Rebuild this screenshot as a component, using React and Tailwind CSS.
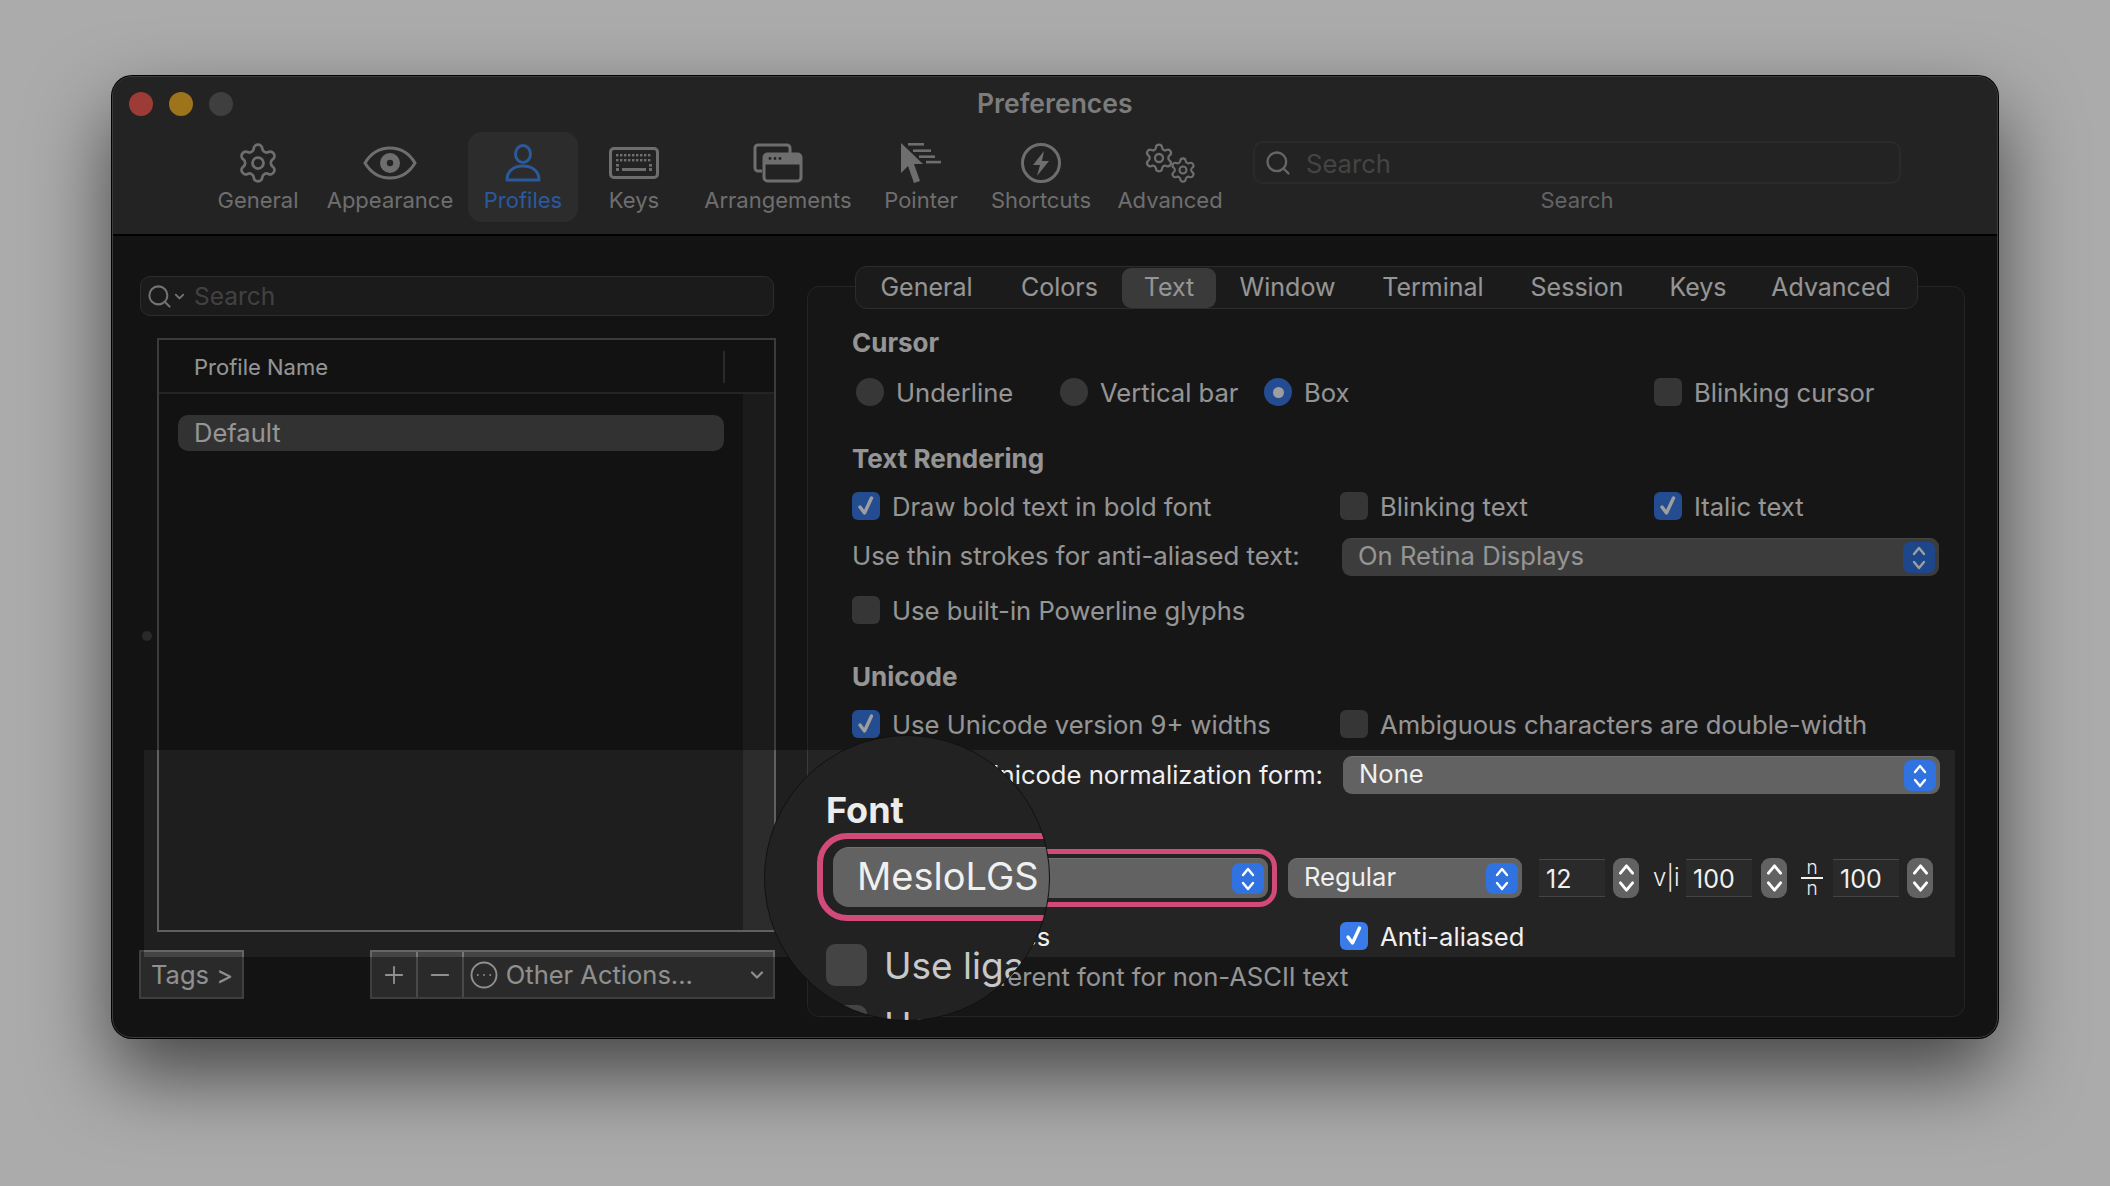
import React from "react";
import { Settings, Search, ChevronDown, Plus, Minus, CircleEllipsis } from "lucide-react";

const toolbarItems = [
  { label: "General", w: "w-[108px]", icon: <Settings size={44} strokeWidth={1.5} /> },
  { label: "Appearance", w: "w-[156px]", icon: <EyeIcon /> },
  { label: "Profiles", w: "w-[110px]", icon: <ProfileIcon />, active: true },
  { label: "Keys", w: "w-[112px]", icon: <KeyboardIcon /> },
  { label: "Arrangements", w: "w-[176px]", icon: <ArrangeIcon /> },
  { label: "Pointer", w: "w-[110px]", icon: <PointerIcon /> },
  { label: "Shortcuts", w: "w-[130px]", icon: <BoltIcon /> },
  { label: "Advanced", w: "w-[128px]", icon: <GearsIcon /> },
];

const tabs = [
  { label: "General", w: "w-[141px]" },
  { label: "Colors", w: "w-[125px]" },
  { label: "Text", w: "w-[94px]", active: true },
  { label: "Window", w: "w-[143px]" },
  { label: "Terminal", w: "w-[148px]" },
  { label: "Session", w: "w-[140px]" },
  { label: "Keys", w: "w-[102px]" },
  { label: "Advanced", w: "w-[164px]" },
];

function EyeIcon() {
  return (
    <svg width="54" height="34" viewBox="0 0 54 34" fill="none" stroke="currentColor" strokeWidth="3">
      <path d="M2 17C8 7 17 2 27 2s19 5 25 15c-6 10-15 15-25 15S8 27 2 17Z" />
      <circle cx="27" cy="17" r="10" fill="currentColor" stroke="none" />
      <circle cx="27" cy="17" r="3.2" fill="#393939" stroke="none" />
    </svg>
  );
}

function ProfileIcon() {
  return (
    <svg width="36" height="38" viewBox="0 0 36 38" fill="none" stroke="currentColor" strokeWidth="3">
      <ellipse cx="18" cy="10" rx="7.5" ry="8.5" />
      <path d="M2 36c0-9 7-14 16-14s16 5 16 14Z" strokeLinejoin="round" />
    </svg>
  );
}

function KeyboardIcon() {
  const dots = [];
  for (let i = 0; i < 9; i++) {
    dots.push(<rect key={"a" + i} x={7 + i * 4} y="7" width="2.4" height="2.4" />);
    dots.push(<rect key={"b" + i} x={7 + i * 4} y="12" width="2.4" height="2.4" />);
  }
  return (
    <svg width="50" height="32" viewBox="0 0 50 32" fill="currentColor">
      <rect x="1.5" y="1.5" width="47" height="29" rx="3.5" fill="none" stroke="currentColor" strokeWidth="3" />
      {dots}
      <rect x="7" y="17" width="3" height="2.6" />
      <rect x="40" y="17" width="3" height="2.6" />
      <rect x="13" y="21" width="24" height="3" />
      <rect x="7" y="21" width="3" height="3" />
      <rect x="40" y="21" width="3" height="3" />
    </svg>
  );
}

function ArrangeIcon() {
  return (
    <svg width="50" height="40" viewBox="0 0 50 40" fill="none" stroke="currentColor" strokeWidth="3">
      <path d="M9 28H5a3 3 0 0 1-3-3V5a3 3 0 0 1 3-3h29a3 3 0 0 1 3 3v6" />
      <rect x="11" y="11" width="37" height="27" rx="3.5" />
      <path d="M11 20h37" />
      <path d="M11 15a4 4 0 0 1 4-4h29a4 4 0 0 1 4 4v5H11Z" fill="currentColor" stroke="none" />
      <circle cx="17" cy="15.5" r="1.4" fill="#393939" stroke="none" />
      <circle cx="22" cy="15.5" r="1.4" fill="#393939" stroke="none" />
      <circle cx="27" cy="15.5" r="1.4" fill="#393939" stroke="none" />
    </svg>
  );
}

function PointerIcon() {
  return (
    <svg width="40" height="40" viewBox="0 0 40 40" fill="currentColor">
      <path d="M0 0v30l7-7 6 17 6-2-6-17h9Z" />
      <rect x="7" y="0" width="16" height="2.6" />
      <rect x="12" y="6.4" width="18" height="2.6" />
      <rect x="18" y="12.4" width="16" height="2.6" />
      <rect x="25" y="17.8" width="15" height="2.6" />
    </svg>
  );
}

function BoltIcon() {
  return (
    <svg width="40" height="40" viewBox="0 0 40 40" fill="none" stroke="currentColor" strokeWidth="3">
      <circle cx="20" cy="20" r="18.5" />
      <path d="M23 8 12 22h7l-3 11 12-15h-7Z" fill="currentColor" stroke="none" />
    </svg>
  );
}

function GearsIcon() {
  return (
    <div className="relative w-[54px] h-[42px]">
      <Settings size={32} strokeWidth={1.7} className="absolute left-0 top-0" />
      <Settings size={28} strokeWidth={1.8} className="absolute right-0 bottom-0" />
    </div>
  );
}

function UpDown({ size = 14 }) {
  return (
    <svg width={size} height={size * 2} viewBox="0 0 14 28" fill="none" stroke="#fff" strokeWidth="2.4" strokeLinecap="round" strokeLinejoin="round">
      <path d="M2 10 7 4l5 6" />
      <path d="M2 18l5 6 5-6" />
    </svg>
  );
}

function Check({ checked, label, className = "" }) {
  return (
    <div className={"flex items-center h-[30px] " + className}>
      <div className={"w-[28px] h-[28px] rounded-[6px] flex items-center justify-center shrink-0 " + (checked ? "bg-[#3a7bea]" : "bg-[#585858]")}>
        {checked && (
          <svg width="20" height="22" viewBox="0 0 20 22" fill="none" stroke="#fff" strokeWidth="3.4" strokeLinecap="round" strokeLinejoin="round">
            <path d="M4 12l4.5 6L15.5 3" />
          </svg>
        )}
      </div>
      <span className="ml-[12px] mt-[3px] whitespace-nowrap">{label}</span>
    </div>
  );
}

function Radio({ on, label, className = "" }) {
  return (
    <div className={"flex items-center h-[30px] " + className}>
      <div className={"w-[28px] h-[28px] rounded-full flex items-center justify-center shrink-0 " + (on ? "bg-[#3a7bea]" : "bg-[#5a5a5a]")}>
        {on && <div className="w-[11px] h-[11px] rounded-full bg-white" />}
      </div>
      <span className="ml-[12px] mt-[3px] whitespace-nowrap">{label}</span>
    </div>
  );
}

function Select({ label, className = "" }) {
  return (
    <div className={"flex items-center justify-between rounded-[9px] bg-[#626262] border-t border-[#707070] pl-[16px] pr-[4px] " + className}>
      <span className="mb-[3px] leading-[30px]">{label}</span>
      <div className="w-[32px] h-[31px] rounded-[7px] bg-[#2f72e0] flex items-center justify-center">
        <UpDown size={14} />
      </div>
    </div>
  );
}

function Stepper() {
  return (
    <div className="w-[26px] h-[40px] rounded-[9px] bg-[#626262] flex items-center justify-center">
      <UpDown size={17} />
    </div>
  );
}

function NumberField({ value }) {
  return (
    <div className="w-[66px] h-[38px] bg-[#2a2a2a] border-t border-[#4a4a4a] border-b border-b-[#444] pl-[7px] pt-[3px] flex items-center text-[25px]">{value}</div>
  );
}

export default function App() {
  return (
    <div className="w-[2110px] h-[1186px] bg-[#ababab] pt-[76px] pl-[112px] overflow-hidden font-['Inter',sans-serif] text-[#f0f0f0] text-[25.6px]">
      <div className="relative w-[1886px] h-[962px] rounded-[20px] overflow-hidden border border-[#3c3c3c] bg-[#1f1f1f] shadow-[0_0_0_1px_#000,0_36px_80px_rgba(0,0,0,0.6)]">
        {/* toolbar */}
        <div className="h-[159px] bg-[#393939] border-b-2 border-[#000] relative">
          <div className="flex items-center h-[54px] pl-[16px] gap-[16px] mb-[1px]">
            <div className="w-[24px] h-[24px] rounded-full bg-[#fe5f57]" />
            <div className="w-[24px] h-[24px] rounded-full bg-[#fdbb2e]" />
            <div className="w-[24px] h-[24px] rounded-full bg-[#666]" />
            <div className="ml-[728px] text-[26.5px] font-semibold text-[#c8c8c8]">Preferences</div>
          </div>
          <div className="flex pl-[91px]">
            {toolbarItems.map((item) => (
              <div
                key={item.label}
                className={"h-[90px] flex flex-col items-center pt-[10px] shrink-0 rounded-[14px] " + item.w + (item.active ? " bg-[#474747] text-[#4490ff]" : " text-[#b2b2b2]")}
              >
                <div className="h-[42px] flex items-center justify-center">{item.icon}</div>
                <div className="mt-[2px] h-[28px] text-[22px] leading-[28px] whitespace-nowrap">{item.label}</div>
              </div>
            ))}
            <div className="ml-[19px] mt-[9px] w-[648px]">
              <div className="h-[43px] rounded-[10px] bg-[#393939] border-2 border-[#454545] flex items-center pl-[9px] text-[#6f6f6f]">
                <Search size={28} strokeWidth={2} className="text-[#a5a5a5]" />
                <span className="ml-[14px] mt-[2px] leading-[30px]">Search</span>
              </div>
              <div className="text-center text-[22px] text-[#a0a0a0]">Search</div>
            </div>
          </div>
        </div>

        <div className="flex">
          {/* profile list */}
          <div className="w-[662px] pl-[26px] pt-[40px] shrink-0">
            <div className="ml-[1px] w-[634px] h-[40px] rounded-[10px] bg-[#2d2d2d] border border-[#474747] flex items-center pl-[5px] text-[#6a6a6a]">
              <Search size={27} strokeWidth={1.8} className="text-[#bbb]" />
              <ChevronDown size={15} strokeWidth={3} className="text-[#bbb] ml-[-1px]" />
              <span className="ml-[7px] text-[24.5px]">Search</span>
            </div>
            <div className="ml-[18px] mt-[22px] w-[619px] h-[594px] border-2 border-[#606060] bg-[#1e1e1e] flex flex-col">
              <div className="h-[54px] border-b-2 border-[#3a3a3a] flex items-center pl-[35px] pt-[2px] relative text-[22px]">
                Profile Name
                <div className="absolute left-[564px] top-[11px] w-[2px] h-[32px] bg-[#444]" />
              </div>
              <div className="flex flex-1">
                <div className="flex-1 pt-[21px] pl-[19px]">
                  <div className="w-[546px] h-[36px] rounded-[10px] bg-[#515151] flex items-center pl-[16px] text-[25.5px]">Default</div>
                </div>
                <div className="w-[31px] bg-[#2c2c2c] -mt-[2px]" />
              </div>
            </div>
            <div className="flex mt-[18px] text-[25.5px] text-[#e8e8e8]">
              <div className="w-[105px] h-[49px] bg-[#444] border-2 border-[#666] flex items-center pl-[10px] pt-[2px]">Tags &gt;</div>
              <div className="ml-[126px] w-[406px] h-[49px] bg-[#444] border-2 border-[#666] flex items-center">
                <div className="w-[46px] h-full flex items-center justify-center border-r-2 border-[#777]">
                  <Plus size={28} strokeWidth={1.6} />
                </div>
                <div className="w-[46px] h-full flex items-center justify-center border-r-2 border-[#777]">
                  <Minus size={28} strokeWidth={1.8} />
                </div>
                <CircleEllipsis size={30} strokeWidth={1.5} className="ml-[5px]" />
                <span className="ml-[7px] mt-[2px]">Other Actions...</span>
                <ChevronDown size={20} strokeWidth={2.6} className="ml-auto mr-[6px]" />
              </div>
            </div>
          </div>

          {/* profile settings */}
          <div className="ml-[32px] mt-[50px] w-[1158px] h-[731px] rounded-[12px] border border-[#3a3a3a] bg-[#252425] pl-[44px]">
            <div className="-mt-[21px] ml-[3px] w-[1063px] h-[43px] rounded-[12px] bg-[#2d2d2d] border border-[#474747] flex items-center text-[25px]">
              {tabs.map((t) => (
                <div key={t.label} className={"h-[40px] flex items-center justify-center shrink-0 rounded-[9px] " + t.w + (t.active ? " bg-[#5e5e5e]" : "")}>
                  {t.label}
                </div>
              ))}
            </div>

            <div className="mt-[19px] h-[30px] leading-[30px] font-bold text-[26px]">Cursor</div>
            <div className="flex mt-[19px]">
              <Radio label="Underline" className="ml-[4px] w-[204px]" />
              <Radio label="Vertical bar" className="w-[204px]" />
              <Radio on label="Box" className="w-[390px]" />
              <Check label="Blinking cursor" />
            </div>

            <div className="mt-[37px] h-[30px] leading-[30px] font-bold text-[26px]">Text Rendering</div>
            <div className="flex mt-[17px]">
              <Check checked label="Draw bold text in bold font" className="w-[488px]" />
              <Check label="Blinking text" className="w-[314px]" />
              <Check checked label="Italic text" />
            </div>
            <div className="flex mt-[17px] items-center">
              <div className="w-[490px] whitespace-nowrap text-[25.8px] leading-[30px] mb-[2px]">Use thin strokes for anti-aliased text:</div>
              <Select label="On Retina Displays" className="w-[597px] h-[38px]" />
            </div>
            <Check label="Use built-in Powerline glyphs" className="mt-[19px]" />

            <div className="mt-[37px] h-[30px] leading-[30px] font-bold text-[26px]">Unicode</div>
            <div className="flex mt-[17px]">
              <Check checked label="Use Unicode version 9+ widths" className="w-[488px]" />
              <Check label="Ambiguous characters are double-width" />
            </div>
            <div className="flex mt-[17px] items-center">
              <div className="w-[471px] text-right whitespace-nowrap leading-[30px]">Unicode normalization form:</div>
              <Select label="None" className="ml-[20px] w-[597px] h-[38px]" />
            </div>

            <div className="mt-[1px] h-[30px] leading-[30px] font-bold text-[26px]">Font</div>
            <div className="flex mt-[33px] items-center">
              <Select label="MesloLGS" className="w-[416px] h-[40px] outline-[5px] outline-offset-[4px] outline-[#d14a7a]" />
              <Select label="Regular" className="ml-[20px] w-[234px] h-[40px]" />
              <div className="ml-[17px]"><NumberField value="12" /></div>
              <div className="ml-[8px]"><Stepper /></div>
              <div className="ml-[14px] w-[26px] text-[24px] font-light">v|i</div>
              <div className="ml-[7px]"><NumberField value="100" /></div>
              <div className="ml-[9px]"><Stepper /></div>
              <div className="ml-[14px] w-[22px] flex flex-col items-center text-[19px] leading-[19px] font-light">
                <span>n</span>
                <div className="w-[22px] h-[2px] bg-[#f0f0f0]" />
                <span>n</span>
              </div>
              <div className="ml-[10px]"><NumberField value="100" /></div>
              <div className="ml-[8px]"><Stepper /></div>
            </div>
            <div className="flex mt-[23px]">
              <Check label="Use ligatures" className="w-[488px]" />
              <Check checked label="Anti-aliased" />
            </div>
            <Check label="Use a different font for non-ASCII text" className="mt-[10px]" />
          </div>
        </div>

        {/* spotlight band: everything outside it is dimmed */}
        <div className="absolute left-[31px] top-[673px] w-[1811px] h-[207px] shadow-[0_0_0_2500px_rgba(0,0,0,0.38)]" />
        <div className="absolute left-[29px] top-[554px] w-[10px] h-[10px] rounded-full bg-[#2a2a2a]" />

        {/* magnifier */}
        <div className="absolute left-[651px] top-[658px] w-[286px] h-[286px] rounded-full overflow-hidden bg-[#232223] border border-[#111] pl-[61px] pt-[52px]">
          <div className="h-[44px] leading-[44px] text-[36px] font-bold text-[#ececec]">Font</div>
          <div className="-ml-[9px] mt-[1px] w-[420px] border-[6px] border-[#d14a7a] rounded-[30px] py-[8px] pl-[10px] pr-[8px]">
            <div className="h-[60px] rounded-[16px] bg-[#626262] border-t border-[#707070] pl-[24px] pb-[2px] flex items-center text-[38px]">MesloLGS</div>
          </div>
          <div className="flex items-center mt-[22px] w-[400px]">
            <div className="w-[41px] h-[42px] rounded-[9px] bg-[#444] shrink-0" />
            <span className="ml-[17px] mt-[2px] text-[37px] leading-[42px] text-[#c8c8c8] whitespace-nowrap">Use ligatures</span>
          </div>
          <div className="flex items-center mt-[18px] w-[400px]">
            <div className="w-[41px] h-[42px] rounded-[9px] bg-[#444] shrink-0" />
            <span className="ml-[17px] text-[37px] leading-[42px] text-[#c8c8c8] whitespace-nowrap">Use</span>
          </div>
        </div>
      </div>
    </div>
  );
}
